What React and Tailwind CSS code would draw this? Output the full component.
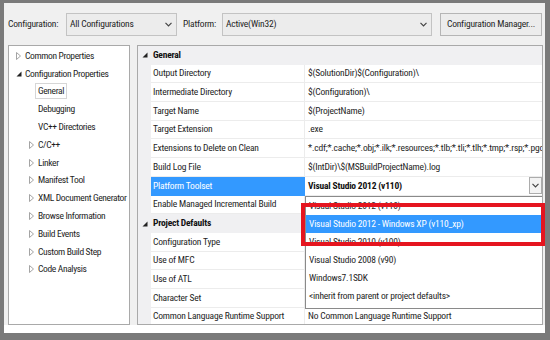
const tree = [
  { label: "Common Properties", depth: 0, state: "closed" },
  { label: "Configuration Properties", depth: 0, state: "open" },
  { label: "General", depth: 1, selected: true },
  { label: "Debugging", depth: 1 },
  { label: "VC++ Directories", depth: 1 },
  { label: "C/C++", depth: 1, state: "closed" },
  { label: "Linker", depth: 1, state: "closed" },
  { label: "Manifest Tool", depth: 1, state: "closed" },
  { label: "XML Document Generator", depth: 1, state: "closed" },
  { label: "Browse Information", depth: 1, state: "closed" },
  { label: "Build Events", depth: 1, state: "closed" },
  { label: "Custom Build Step", depth: 1, state: "closed" },
  { label: "Code Analysis", depth: 1, state: "closed" },
];

const rows = [
  { header: "General" },
  { name: "Output Directory", value: "$(SolutionDir)$(Configuration)\\" },
  { name: "Intermediate Directory", value: "$(Configuration)\\" },
  { name: "Target Name", value: "$(ProjectName)" },
  { name: "Target Extension", value: ".exe" },
  {
    name: "Extensions to Delete on Clean",
    value: "*.cdf;*.cache;*.obj;*.ilk;*.resources;*.tlb;*.tli;*.tlh;*.tmp;*.rsp;*.pgc;*.pgd;*.meta;$(TargetPath)",
  },
  { name: "Build Log File", value: "$(IntDir)\\$(MSBuildProjectName).log" },
  { name: "Platform Toolset", value: "Visual Studio 2012 (v110)", active: true },
  { name: "Enable Managed Incremental Build" },
  { header: "Project Defaults" },
  { name: "Configuration Type" },
  { name: "Use of MFC" },
  { name: "Use of ATL" },
  { name: "Character Set" },
  { name: "Common Language Runtime Support", value: "No Common Language Runtime Support" },
];

const options = [
  "Visual Studio 2012 (v110)",
  "Visual Studio 2012 - Windows XP (v110_xp)",
  "Visual Studio 2010 (v100)",
  "Visual Studio 2008 (v90)",
  "Windows7.1SDK",
  "<inherit from parent or project defaults>",
];

function Chevron() {
  return (
    <svg width="7" height="5" viewBox="0 0 7 5" className="flex-shrink-0">
      <path d="M0.5 0.8 L3.5 3.8 L6.5 0.8" fill="none" stroke="#444" strokeWidth="1.2" />
    </svg>
  );
}

function Arrow({ open }) {
  if (open) {
    return (
      <svg width="6" height="6" viewBox="0 0 6 6">
        <path d="M5.5 0.5 L5.5 5.5 L0.5 5.5 Z" fill="#222" />
      </svg>
    );
  }
  return (
    <svg width="5" height="8" viewBox="0 0 5 8">
      <path d="M0.5 0.5 L4.5 4 L0.5 7.5 Z" fill="none" stroke="#9a9a9a" strokeWidth="0.9" />
    </svg>
  );
}

function TreeRow({ item }) {
  return (
    <div className={`flex items-center h-[17.8px] ${item.depth ? "pl-[18px]" : "pl-[5px]"}`}>
      <span className="w-[9px] mr-[2px] flex items-center justify-center">
        {item.state && <Arrow open={item.state === "open"} />}
      </span>
      {item.selected ? (
        <span className="-ml-[3px] px-[2px] border border-[#d6d6d6] leading-[14px]">{item.label}</span>
      ) : (
        <span className="whitespace-nowrap">{item.label}</span>
      )}
    </div>
  );
}

function GridRow({ row }) {
  if (row.header) {
    return (
      <div className="flex items-center h-[18.7px] bg-[#f0f0f2]">
        <span className="w-[13px] flex items-center justify-center">
          <Arrow open />
        </span>
        <span className="pl-[2px] font-bold text-[#111]">{row.header}</span>
      </div>
    );
  }
  return (
    <div className="flex h-[18.7px]">
      <span className="w-[13px] bg-[#f0f0f2] flex-shrink-0" />
      <span
        className={`w-[154px] flex-shrink-0 flex items-center pl-[2px] border-r border-b ${
          row.active ? "bg-[#3399ff] text-white border-[#3399ff]" : "border-[#ececec]"
        }`}
      >
        {row.name}
      </span>
      <span className="flex-1 min-w-0 flex items-center pl-[3px] border-b border-[#ececec] overflow-hidden">
        {row.active ? (
          <>
            <span className="flex-1 font-bold text-[#111]">{row.value}</span>
            <span className="w-[13px] h-[17px] border border-[#acacac] bg-[#f3f3f3] flex items-center justify-center">
              <Chevron />
            </span>
          </>
        ) : (
          <span className="whitespace-nowrap">{row.value}</span>
        )}
      </span>
    </div>
  );
}

export default function App() {
  return (
    <div className="relative w-[550px] h-[340px] bg-[#7a7a7a] pt-[3px] pl-[4px] pr-[5px] pb-[7px] overflow-hidden [font-family:'Roboto_Condensed','Liberation_Sans',sans-serif] text-[9.5px] tracking-[-0.2px] text-[#1e1e1e]">
      <div className="h-full bg-[#f0f0f0] flex flex-col">
        {/* Toolbar */}
        <div className="h-[42px] flex items-center pl-[4px] flex-shrink-0">
          <span className="w-[58px]">Configuration:</span>
          <div className="w-[111px] h-[23px] border border-[#c3c3c3] bg-[#ececec] flex items-center pl-[3px] pr-[4px]">
            <span className="flex-1">All Configurations</span>
            <Chevron />
          </div>
          <span className="ml-[6px] w-[39px]">Platform:</span>
          <div className="w-[210px] h-[23px] border border-[#c3c3c3] bg-[#ececec] flex items-center pl-[3px] pr-[4px]">
            <span className="flex-1">Active(Win32)</span>
            <Chevron />
          </div>
          <button className="ml-[8px] w-[102px] h-[23px] border border-[#b5b5b5] bg-[#ececec] flex items-center justify-center">
            Configuration Manager...
          </button>
        </div>

        {/* Panels */}
        <div className="h-[280px] flex flex-shrink-0">
          <div className="ml-[4px] w-[122px] border border-[#a9a9a9] bg-white pt-[1px] overflow-hidden tracking-[-0.35px]">
            {tree.map((item) => (
              <TreeRow key={item.label} item={item} />
            ))}
          </div>
          <div className="relative ml-[7px] w-[406px] border border-[#a9a9a9] bg-white overflow-hidden">
            {rows.map((row) => (
              <GridRow key={row.header || row.name} row={row} />
            ))}

            {/* Toolset drop-down list */}
            <div className="absolute left-[167px] top-[150px] w-[238px] h-[113px] border border-[#8a8a8a] bg-white">
              {options.map((opt, i) => (
                <div
                  key={opt}
                  className={`h-[18px] flex items-center pl-[3px] ${i === 1 ? "bg-[#3399ff] text-white" : ""}`}
                >
                  {opt}
                </div>
              ))}
            </div>
          </div>
        </div>

        <div className="flex-1 bg-white" />
      </div>

      {/* Red highlight frame */}
      <div className="absolute left-[301px] top-[203px] w-[244px] h-[43px] border-[4px] border-[#e5151f]" />
    </div>
  );
}
